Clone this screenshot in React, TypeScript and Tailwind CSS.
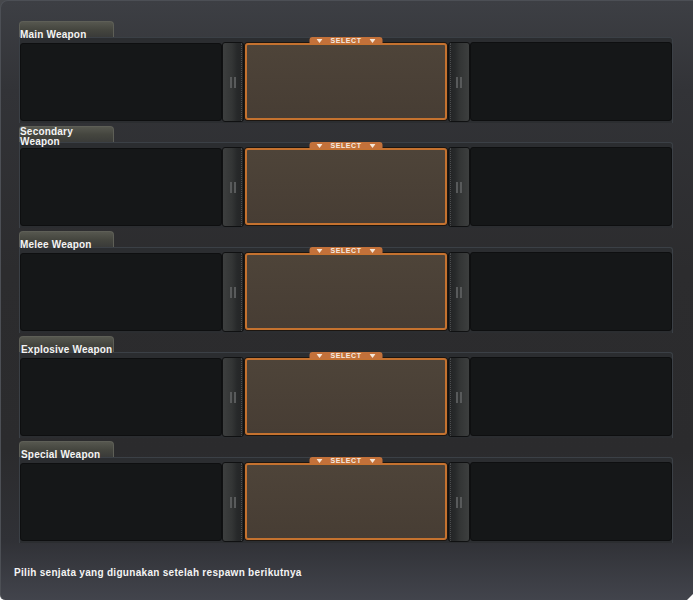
import React from "react";

const sections: { label: string[]; pt: string }[] = [
  { label: ["Main Weapon"], pt: "pt-[9px] leading-[8px]" },
  { label: ["Secondary", "Weapon"], pt: "pt-0 leading-[10px]" },
  { label: ["Melee Weapon"], pt: "pt-[9px] leading-[8px]" },
  { label: ["Explosive Weapon"], pt: "pt-[9px] pl-[1px] leading-[8px]" },
  { label: ["Special Weapon"], pt: "pt-[9px] pl-[1px] leading-[8px]" },
];

function Tri() {
  return (
    <svg width="6" height="4" viewBox="0 0 6 4" className="block">
      <path d="M0 0 L6 0 L3 4 Z" fill="#f4e6d8" />
    </svg>
  );
}

function Divider({ side }: { side: "left" | "right" }) {
  const isLeft = side === "left";
  return (
    <div
      className={
        "relative h-[80px] w-[22px] shrink-0 rounded-[3px] border border-[#101112] overflow-hidden " +
        (isLeft
          ? "bg-[linear-gradient(to_right,#3d3f3f,#333535_45%,#27292a_70%,#232425)]"
          : "bg-[linear-gradient(to_left,#3d3f3f,#333535_45%,#27292a_70%,#232425)]")
      }
    >
      <div
        className={
          "absolute top-0 bottom-0 w-0 border-dotted border-[#4b4d4f] " +
          (isLeft ? "right-[1px] border-r" : "left-[1px] border-l")
        }
      />
      <div className="flex h-full items-center justify-center gap-[2px]">
        <div className="h-[11px] w-[2px] bg-[#585a5b]" />
        <div className="h-[11px] w-[2px] bg-[#585a5b]" />
      </div>
    </div>
  );
}

function Section({ label, pt }: { label: string[]; pt: string }) {
  return (
    <div className="w-[654px]">
      <div
        className={
          "h-[16px] w-[95px] rounded-t-[4px] border-x border-t border-[#5e5f57] bg-[linear-gradient(to_bottom,#56574f,#45463f_50%,#3a3b39)] text-[10px] font-bold tracking-[0.2px] text-[#f4f4f4] " +
          pt
        }
      >
        {label.map((l, i) => (
          <div key={i} className="whitespace-nowrap">
            {l}
          </div>
        ))}
      </div>
      <div className="rounded-tr-[3px] border border-b-0 border-[#3b4046] bg-[#2b2d30] pt-[4px] pb-[1px]">
        <div className="flex h-[80px] items-start">
          <div className="mt-[1px] h-[78px] w-[202px] shrink-0 rounded-[3px] border border-[#0e0f10] bg-[#151718]" />
          <Divider side="left" />
          <div className="relative ml-[1px] mt-[1px] h-[77px] w-[202px] shrink-0 rounded-[3px] border-2 border-[#c5722f] bg-[linear-gradient(to_bottom,#4e4439,#473d34)] shadow-[0_0_0_1px_#1d1610]">
            <div className="absolute left-1/2 top-[-8px] flex h-[7px] w-[73px] -translate-x-1/2 items-center justify-center gap-[8px] rounded-t-[3px] bg-[#c3713a]">
              <Tri />
              <span className="text-[7px] font-bold leading-[7px] tracking-[0.6px] text-[#f6ebe0]">SELECT</span>
              <Tri />
            </div>
          </div>
          <div className="ml-[1px]">
            <Divider side="right" />
          </div>
          <div className="h-[79px] w-[202px] shrink-0 rounded-[3px] border border-[#0e0f10] bg-[#151718]" />
        </div>
      </div>
    </div>
  );
}

export default function App() {
  return (
    <div
      className="h-[600px] w-[693px] bg-[linear-gradient(to_bottom,#46484c_50%,#ffffff_50%)]"
      style={{ fontFamily: '"Liberation Sans", Arial, sans-serif' }}
    >
      <div className="h-[600px] w-[693px] rounded-tl-[8px] rounded-bl-[5px] border-l border-t border-[#4c4f55] bg-[linear-gradient(to_bottom,#3d3f44_0%,#323337_15%,#2c2c2e_45%,#2b2b2d_75%,#303136_90%,#42444c_100%)] [clip-path:polygon(0_0,100%_0,100%_calc(100%-6px),calc(100%-6px)_100%,0_100%)]">
        <div className="flex flex-col gap-[3px] pl-[18px] pt-[20px]">
          {sections.map((s, i) => (
            <Section key={i} label={s.label} pt={s.pt} />
          ))}
        </div>
        <div className="mt-[24px] pl-[13px] text-[10px] font-bold leading-[12px] tracking-[0.3px] text-[#f4f4f4]">
          Pilih senjata yang digunakan setelah respawn berikutnya
        </div>
      </div>
    </div>
  );
}
